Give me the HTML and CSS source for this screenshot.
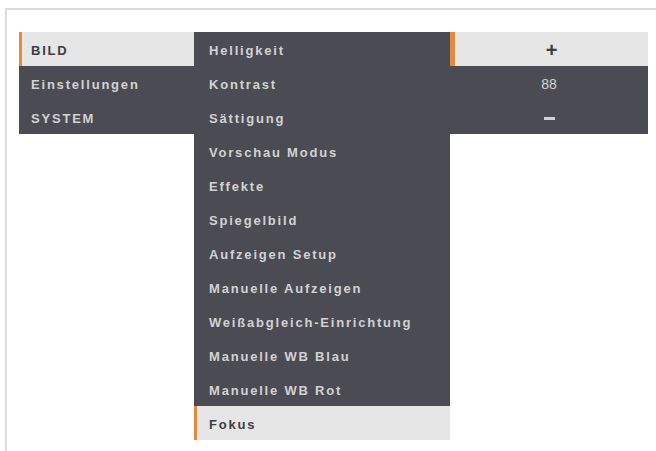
FILE: index.html
```
<!DOCTYPE html>
<html lang="de">
<head>
    <meta charset="UTF-8">
    <meta name="viewport" content="width=device-width, initial-scale=1.0">
    <title>Menü</title>
    <link rel="stylesheet" href="styles.css">
</head>
<body>
    <div class="screen">
        <div class="menu">
            <ul class="column main">
                <li class="item active">BILD</li>
                <li class="item">Einstellungen</li>
                <li class="item">SYSTEM</li>
            </ul>

            <ul class="column sub">
                <li class="item">Helligkeit</li>
                <li class="item">Kontrast</li>
                <li class="item">Sättigung</li>
                <li class="item">Vorschau Modus</li>
                <li class="item">Effekte</li>
                <li class="item">Spiegelbild</li>
                <li class="item">Aufzeigen Setup</li>
                <li class="item">Manuelle Aufzeigen</li>
                <li class="item">Weißabgleich-Einrichtung</li>
                <li class="item">Manuelle WB Blau</li>
                <li class="item">Manuelle WB Rot</li>
                <li class="item active">Fokus</li>
            </ul>

            <ul class="column value">
                <li class="item active step">+</li>
                <li class="item number">88</li>
                <li class="item step"><span class="minus"></span></li>
            </ul>
        </div>
    </div>
</body>
</html>
```

FILE: styles.css
```
:root {
    --dark: #4b4c53;
    --light: #e6e6e7;
    --accent: #e38a3c;
    --text-light: #d2d2d4;
    --text-dark: #3c3d42;
    --frame: #dcdcdc;
}

* {
    box-sizing: border-box;
    margin: 0;
    padding: 0;
}

body {
    background: #ffffff;
    font-family: 'Liberation Sans', Arial, sans-serif;
    height: 451px;
    overflow: hidden;
}

.screen {
    margin: 8px 0 0 5px;
    border-top: 2px solid var(--frame);
    border-left: 2px solid var(--frame);
    height: 460px;
    padding: 22px 0 0 12px;
}

.menu {
    display: flex;
    align-items: flex-start;
}

.column {
    list-style: none;
    background: var(--dark);
}

.main {
    width: 175px;
}

.sub {
    width: 256px;
}

.value {
    width: 198px;
}

.item {
    height: 34px;
    line-height: 38px;
    padding-left: 12px;
    font-size: 13px;
    font-weight: bold;
    letter-spacing: 1.8px;
    color: var(--text-light);
    white-space: nowrap;
}

.sub .item {
    padding-left: 15px;
}

.item.active {
    background: var(--light);
    color: var(--text-dark);
    border-left: 3px solid var(--accent);
    padding-left: 9px;
}

.sub .item.active {
    padding-left: 12px;
}

.value .item {
    padding-left: 0;
    text-align: center;
    letter-spacing: 0;
}

.value .item.active {
    padding-left: 0;
    border-left-width: 5px;
}

.value .number {
    font-size: 14px;
    font-weight: normal;
    line-height: 36px;
}

.value .step {
    font-size: 20px;
    line-height: 36px;
}

.minus {
    display: inline-block;
    width: 11px;
    height: 3px;
    background: var(--text-light);
    vertical-align: middle;
    margin-bottom: 2px;
}
```
